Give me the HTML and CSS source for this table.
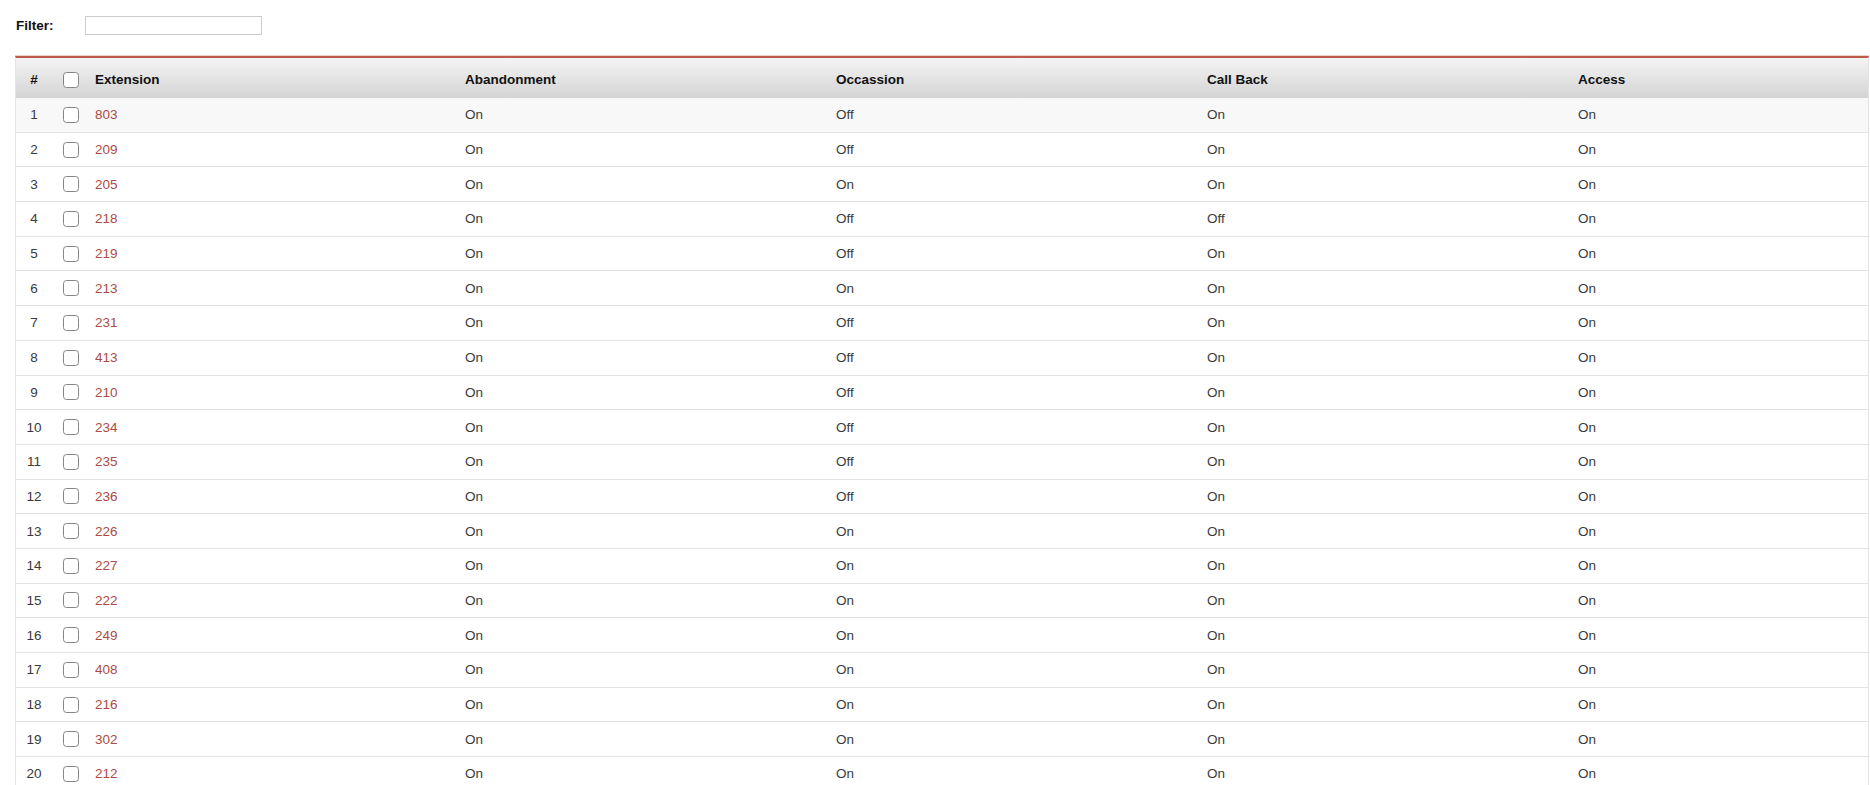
FILE: index.html
```html
<!DOCTYPE html>
<html lang="en">
<head>
<meta charset="utf-8">
<title>Extensions</title>
<link rel="stylesheet" href="styles.css">
</head>
<body>
<div class="page">
  <div class="filter">
    <label class="filter-label" for="flt">Filter:</label>
    <input id="flt" class="filter-input" type="text">
  </div>
  <table class="grid">
    <colgroup>
      <col class="c-num"><col class="c-chk"><col class="c-ext"><col class="c-mid"><col class="c-mid"><col class="c-mid"><col>
    </colgroup>
    <thead>
      <tr>
        <th class="num">#</th>
        <th class="chk"><input type="checkbox" class="cb"></th>
        <th>Extension</th>
        <th>Abandonment</th>
        <th>Occassion</th>
        <th>Call Back</th>
        <th>Access</th>
      </tr>
    </thead>
    <tbody>
      <tr class="hover"><td class="num">1</td><td class="chk"><input type="checkbox" class="cb"></td><td><a href="#">803</a></td><td>On</td><td>Off</td><td>On</td><td>On</td></tr>
      <tr><td class="num">2</td><td class="chk"><input type="checkbox" class="cb"></td><td><a href="#">209</a></td><td>On</td><td>Off</td><td>On</td><td>On</td></tr>
      <tr><td class="num">3</td><td class="chk"><input type="checkbox" class="cb"></td><td><a href="#">205</a></td><td>On</td><td>On</td><td>On</td><td>On</td></tr>
      <tr><td class="num">4</td><td class="chk"><input type="checkbox" class="cb"></td><td><a href="#">218</a></td><td>On</td><td>Off</td><td>Off</td><td>On</td></tr>
      <tr><td class="num">5</td><td class="chk"><input type="checkbox" class="cb"></td><td><a href="#">219</a></td><td>On</td><td>Off</td><td>On</td><td>On</td></tr>
      <tr><td class="num">6</td><td class="chk"><input type="checkbox" class="cb"></td><td><a href="#">213</a></td><td>On</td><td>On</td><td>On</td><td>On</td></tr>
      <tr><td class="num">7</td><td class="chk"><input type="checkbox" class="cb"></td><td><a href="#">231</a></td><td>On</td><td>Off</td><td>On</td><td>On</td></tr>
      <tr><td class="num">8</td><td class="chk"><input type="checkbox" class="cb"></td><td><a href="#">413</a></td><td>On</td><td>Off</td><td>On</td><td>On</td></tr>
      <tr><td class="num">9</td><td class="chk"><input type="checkbox" class="cb"></td><td><a href="#">210</a></td><td>On</td><td>Off</td><td>On</td><td>On</td></tr>
      <tr><td class="num">10</td><td class="chk"><input type="checkbox" class="cb"></td><td><a href="#">234</a></td><td>On</td><td>Off</td><td>On</td><td>On</td></tr>
      <tr><td class="num">11</td><td class="chk"><input type="checkbox" class="cb"></td><td><a href="#">235</a></td><td>On</td><td>Off</td><td>On</td><td>On</td></tr>
      <tr><td class="num">12</td><td class="chk"><input type="checkbox" class="cb"></td><td><a href="#">236</a></td><td>On</td><td>Off</td><td>On</td><td>On</td></tr>
      <tr><td class="num">13</td><td class="chk"><input type="checkbox" class="cb"></td><td><a href="#">226</a></td><td>On</td><td>On</td><td>On</td><td>On</td></tr>
      <tr><td class="num">14</td><td class="chk"><input type="checkbox" class="cb"></td><td><a href="#">227</a></td><td>On</td><td>On</td><td>On</td><td>On</td></tr>
      <tr><td class="num">15</td><td class="chk"><input type="checkbox" class="cb"></td><td><a href="#">222</a></td><td>On</td><td>On</td><td>On</td><td>On</td></tr>
      <tr><td class="num">16</td><td class="chk"><input type="checkbox" class="cb"></td><td><a href="#">249</a></td><td>On</td><td>On</td><td>On</td><td>On</td></tr>
      <tr><td class="num">17</td><td class="chk"><input type="checkbox" class="cb"></td><td><a href="#">408</a></td><td>On</td><td>On</td><td>On</td><td>On</td></tr>
      <tr><td class="num">18</td><td class="chk"><input type="checkbox" class="cb"></td><td><a href="#">216</a></td><td>On</td><td>On</td><td>On</td><td>On</td></tr>
      <tr><td class="num">19</td><td class="chk"><input type="checkbox" class="cb"></td><td><a href="#">302</a></td><td>On</td><td>On</td><td>On</td><td>On</td></tr>
      <tr><td class="num">20</td><td class="chk"><input type="checkbox" class="cb"></td><td><a href="#">212</a></td><td>On</td><td>On</td><td>On</td><td>On</td></tr>
    </tbody>
  </table>
</div>
</body>
</html>
```

FILE: styles.css
```css
html, body {
  margin: 0;
  padding: 0;
  overflow: hidden;
  background: #ffffff;
}

body {
  font-family: "Liberation Sans", Arial, sans-serif;
  font-size: 13.5px;
  color: #3a3a3a;
}

.page {
  padding: 16px 1px 0 15px;
}

.filter {
  display: flex;
  align-items: center;
  height: 19px;
  padding-left: 1px;
}

.filter-label {
  font-weight: bold;
  color: #111111;
  width: 69px;
}

.filter-input {
  box-sizing: border-box;
  width: 177px;
  height: 19px;
  margin: 0;
  padding: 0 4px;
  border: 1px solid #cccccc;
  background: #ffffff;
  font: inherit;
  outline: none;
}

.grid {
  margin-top: 21px;
  width: 1854px;
  table-layout: fixed;
  border-collapse: separate;
  border-spacing: 0;
  border-top: 2px solid #bd5b4b;
  border-left: 1px solid #e4e4e4;
  border-right: 1px solid #e4e4e4;
  box-shadow: 0 -1px 0 #f4d2c9;
}

.c-num { width: 36px; }
.c-chk { width: 33px; }
.c-ext { width: 370px; }
.c-mid { width: 371px; }

.grid th {
  box-sizing: border-box;
  height: 40px;
  padding: 3px 10px 0;
  text-align: left;
  font-weight: bold;
  color: #111111;
  background: linear-gradient(to bottom, #f3f3f3 0%, #e4e4e4 50%, #d3d3d3 100%);
  vertical-align: middle;
  white-space: nowrap;
}

.grid td {
  box-sizing: border-box;
  height: 34.7px;
  padding: 0 10px;
  border-bottom: 1px solid #e2e2e2;
  vertical-align: middle;
  white-space: nowrap;
}

.grid .num {
  padding: 0;
  text-align: center;
}

.grid th.num {
  padding-top: 3px;
}

.grid .chk {
  padding: 0 0 0 11px;
}

.grid th.chk {
  padding-top: 3px;
}

.grid tr.hover td {
  background: #f8f8f8;
}

.grid a {
  color: #ad4b44;
  text-decoration: none;
}

.cb {
  -webkit-appearance: none;
  appearance: none;
  display: block;
  box-sizing: border-box;
  width: 16px;
  height: 16px;
  margin: 0;
  border: 1px solid #858585;
  border-radius: 3.5px;
  background: #ffffff;
}
```
